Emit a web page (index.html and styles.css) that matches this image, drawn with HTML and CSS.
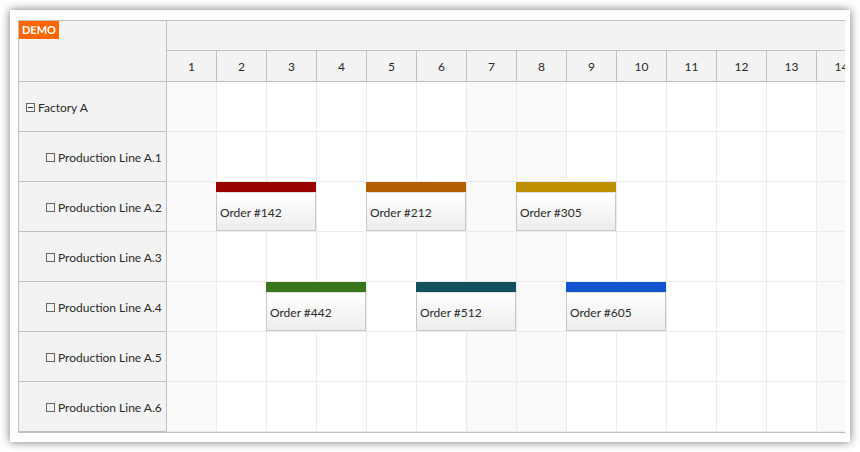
FILE: index.html
```html
<!DOCTYPE html>
<html>
<head>
<meta charset="utf-8">
<title>Scheduler</title>
<link rel="stylesheet" href="styles.css">
</head>
<body>
<div class="panel">
  <div class="scheduler">
    <div class="rowheaders">
      <div class="corner"><span class="demo">DEMO</span></div>
      <div class="rh parent"><span class="icon exp"></span><span>Factory A</span></div>
      <div class="rh"><span class="icon"></span><span>Production Line A.1</span></div>
      <div class="rh"><span class="icon"></span><span>Production Line A.2</span></div>
      <div class="rh"><span class="icon"></span><span>Production Line A.3</span></div>
      <div class="rh"><span class="icon"></span><span>Production Line A.4</span></div>
      <div class="rh"><span class="icon"></span><span>Production Line A.5</span></div>
      <div class="rh"><span class="icon"></span><span>Production Line A.6</span></div>
    </div>
    <div class="timeline">
      <div class="inner">
        <div class="hdr1"></div>
        <div class="hdr2">
          <div class="hc">1</div><div class="hc">2</div><div class="hc">3</div><div class="hc">4</div><div class="hc">5</div><div class="hc">6</div><div class="hc">7</div><div class="hc">8</div><div class="hc">9</div><div class="hc">10</div><div class="hc">11</div><div class="hc">12</div><div class="hc">13</div><div class="hc">14</div>
        </div>
        <div class="row">
          <div class="c we"></div><div class="c"></div><div class="c"></div><div class="c"></div><div class="c"></div><div class="c"></div><div class="c we"></div><div class="c we"></div><div class="c"></div><div class="c"></div><div class="c"></div><div class="c"></div><div class="c"></div><div class="c we"></div>
        </div>
        <div class="row">
          <div class="c we"></div><div class="c"></div><div class="c"></div><div class="c"></div><div class="c"></div><div class="c"></div><div class="c we"></div><div class="c we"></div><div class="c"></div><div class="c"></div><div class="c"></div><div class="c"></div><div class="c"></div><div class="c we"></div>
        </div>
        <div class="row">
          <div class="c we"></div><div class="c"></div><div class="c"></div><div class="c"></div><div class="c"></div><div class="c"></div><div class="c we"></div><div class="c we"></div><div class="c"></div><div class="c"></div><div class="c"></div><div class="c"></div><div class="c"></div><div class="c we"></div>
          <div class="ev" style="left:49px"><div class="bar" style="background:#990000"></div><div class="evbody">Order #142</div></div>
          <div class="ev" style="left:199px"><div class="bar" style="background:#b45f06"></div><div class="evbody">Order #212</div></div>
          <div class="ev" style="left:349px"><div class="bar" style="background:#bf9000"></div><div class="evbody">Order #305</div></div>
        </div>
        <div class="row">
          <div class="c we"></div><div class="c"></div><div class="c"></div><div class="c"></div><div class="c"></div><div class="c"></div><div class="c we"></div><div class="c we"></div><div class="c"></div><div class="c"></div><div class="c"></div><div class="c"></div><div class="c"></div><div class="c we"></div>
        </div>
        <div class="row">
          <div class="c we"></div><div class="c"></div><div class="c"></div><div class="c"></div><div class="c"></div><div class="c"></div><div class="c we"></div><div class="c we"></div><div class="c"></div><div class="c"></div><div class="c"></div><div class="c"></div><div class="c"></div><div class="c we"></div>
          <div class="ev" style="left:99px"><div class="bar" style="background:#38761d"></div><div class="evbody">Order #442</div></div>
          <div class="ev" style="left:249px"><div class="bar" style="background:#134f5c"></div><div class="evbody">Order #512</div></div>
          <div class="ev" style="left:399px"><div class="bar" style="background:#1155cc"></div><div class="evbody">Order #605</div></div>
        </div>
        <div class="row">
          <div class="c we"></div><div class="c"></div><div class="c"></div><div class="c"></div><div class="c"></div><div class="c"></div><div class="c we"></div><div class="c we"></div><div class="c"></div><div class="c"></div><div class="c"></div><div class="c"></div><div class="c"></div><div class="c we"></div>
        </div>
        <div class="row">
          <div class="c we"></div><div class="c"></div><div class="c"></div><div class="c"></div><div class="c"></div><div class="c"></div><div class="c we"></div><div class="c we"></div><div class="c"></div><div class="c"></div><div class="c"></div><div class="c"></div><div class="c"></div><div class="c we"></div>
        </div>
      </div>
    </div>
  </div>
</div>
</body>
</html>
```
FILE: styles.css
```css
* { box-sizing: border-box; }
body {
  margin: 0;
  background: #fff;
  font-family: Lato, "Liberation Sans", sans-serif;
  font-size: 12px;
  color: #2a2a2a;
}
.panel {
  margin: 10px;
  width: 840px;
  height: 432px;
  background: #fff;
  box-shadow: 0 0 9px rgba(0, 0, 0, 0.55);
  padding: 10px 0 0 8px;
}
.scheduler {
  width: 827px;
  border: 1px solid #c0c0c0;
  border-right: none;
  display: flex;
  overflow: hidden;
}
.rowheaders {
  width: 148px;
  flex: none;
  background: #f3f3f3;
  border-right: 1px solid #c0c0c0;
}
.corner {
  height: 61px;
  border-bottom: 1px solid #c0c0c0;
  position: relative;
}
.demo {
  position: absolute;
  left: 0;
  top: 0;
  height: 18px;
  line-height: 18px;
  padding: 0 3px;
  background: #ff6600;
  color: #fff;
  font-size: 11px;
  font-weight: bold;
}
.rh {
  height: 50px;
  border-bottom: 1px solid #c0c0c0;
  display: flex;
  align-items: center;
  gap: 3px;
  padding-left: 27px;
  padding-top: 2px;
  white-space: nowrap;
}
.rh.parent { padding-left: 7px; }
.icon {
  width: 9px;
  height: 9px;
  border: 1px solid #666;
  position: relative;
  flex: none;
}
.icon.exp::after {
  content: "";
  position: absolute;
  left: 1px;
  right: 1px;
  top: 3px;
  height: 1px;
  background: #333;
}
.timeline {
  flex: 1;
  min-width: 0;
  overflow: hidden;
}
.inner { width: 700px; }
.hdr1 {
  height: 30px;
  background: #f3f3f3;
  border-bottom: 1px solid #c0c0c0;
}
.hdr2 {
  display: flex;
  height: 31px;
  background: #f3f3f3;
  border-bottom: 1px solid #c0c0c0;
}
.hc {
  width: 50px;
  flex: none;
  border-right: 1px solid #c0c0c0;
  display: flex;
  align-items: center;
  justify-content: center;
  padding-top: 1px;
}
.row {
  display: flex;
  height: 50px;
  position: relative;
}
.c {
  width: 50px;
  flex: none;
  background: #fff;
  border-right: 1px solid #ebebeb;
  border-bottom: 1px solid #ebebeb;
}
.c.we { background: #f9f9f9; }
.ev {
  position: absolute;
  top: 0;
  width: 100px;
  height: 49px;
}
.bar { height: 10px; }
.evbody {
  height: 39px;
  border: 1px solid #c8c8c8;
  border-top-color: #e2e2e2;
  background: linear-gradient(#ffffff, #ededed);
  padding-left: 3px;
  padding-top: 2px;
  display: flex;
  align-items: center;
  white-space: nowrap;
}
```
